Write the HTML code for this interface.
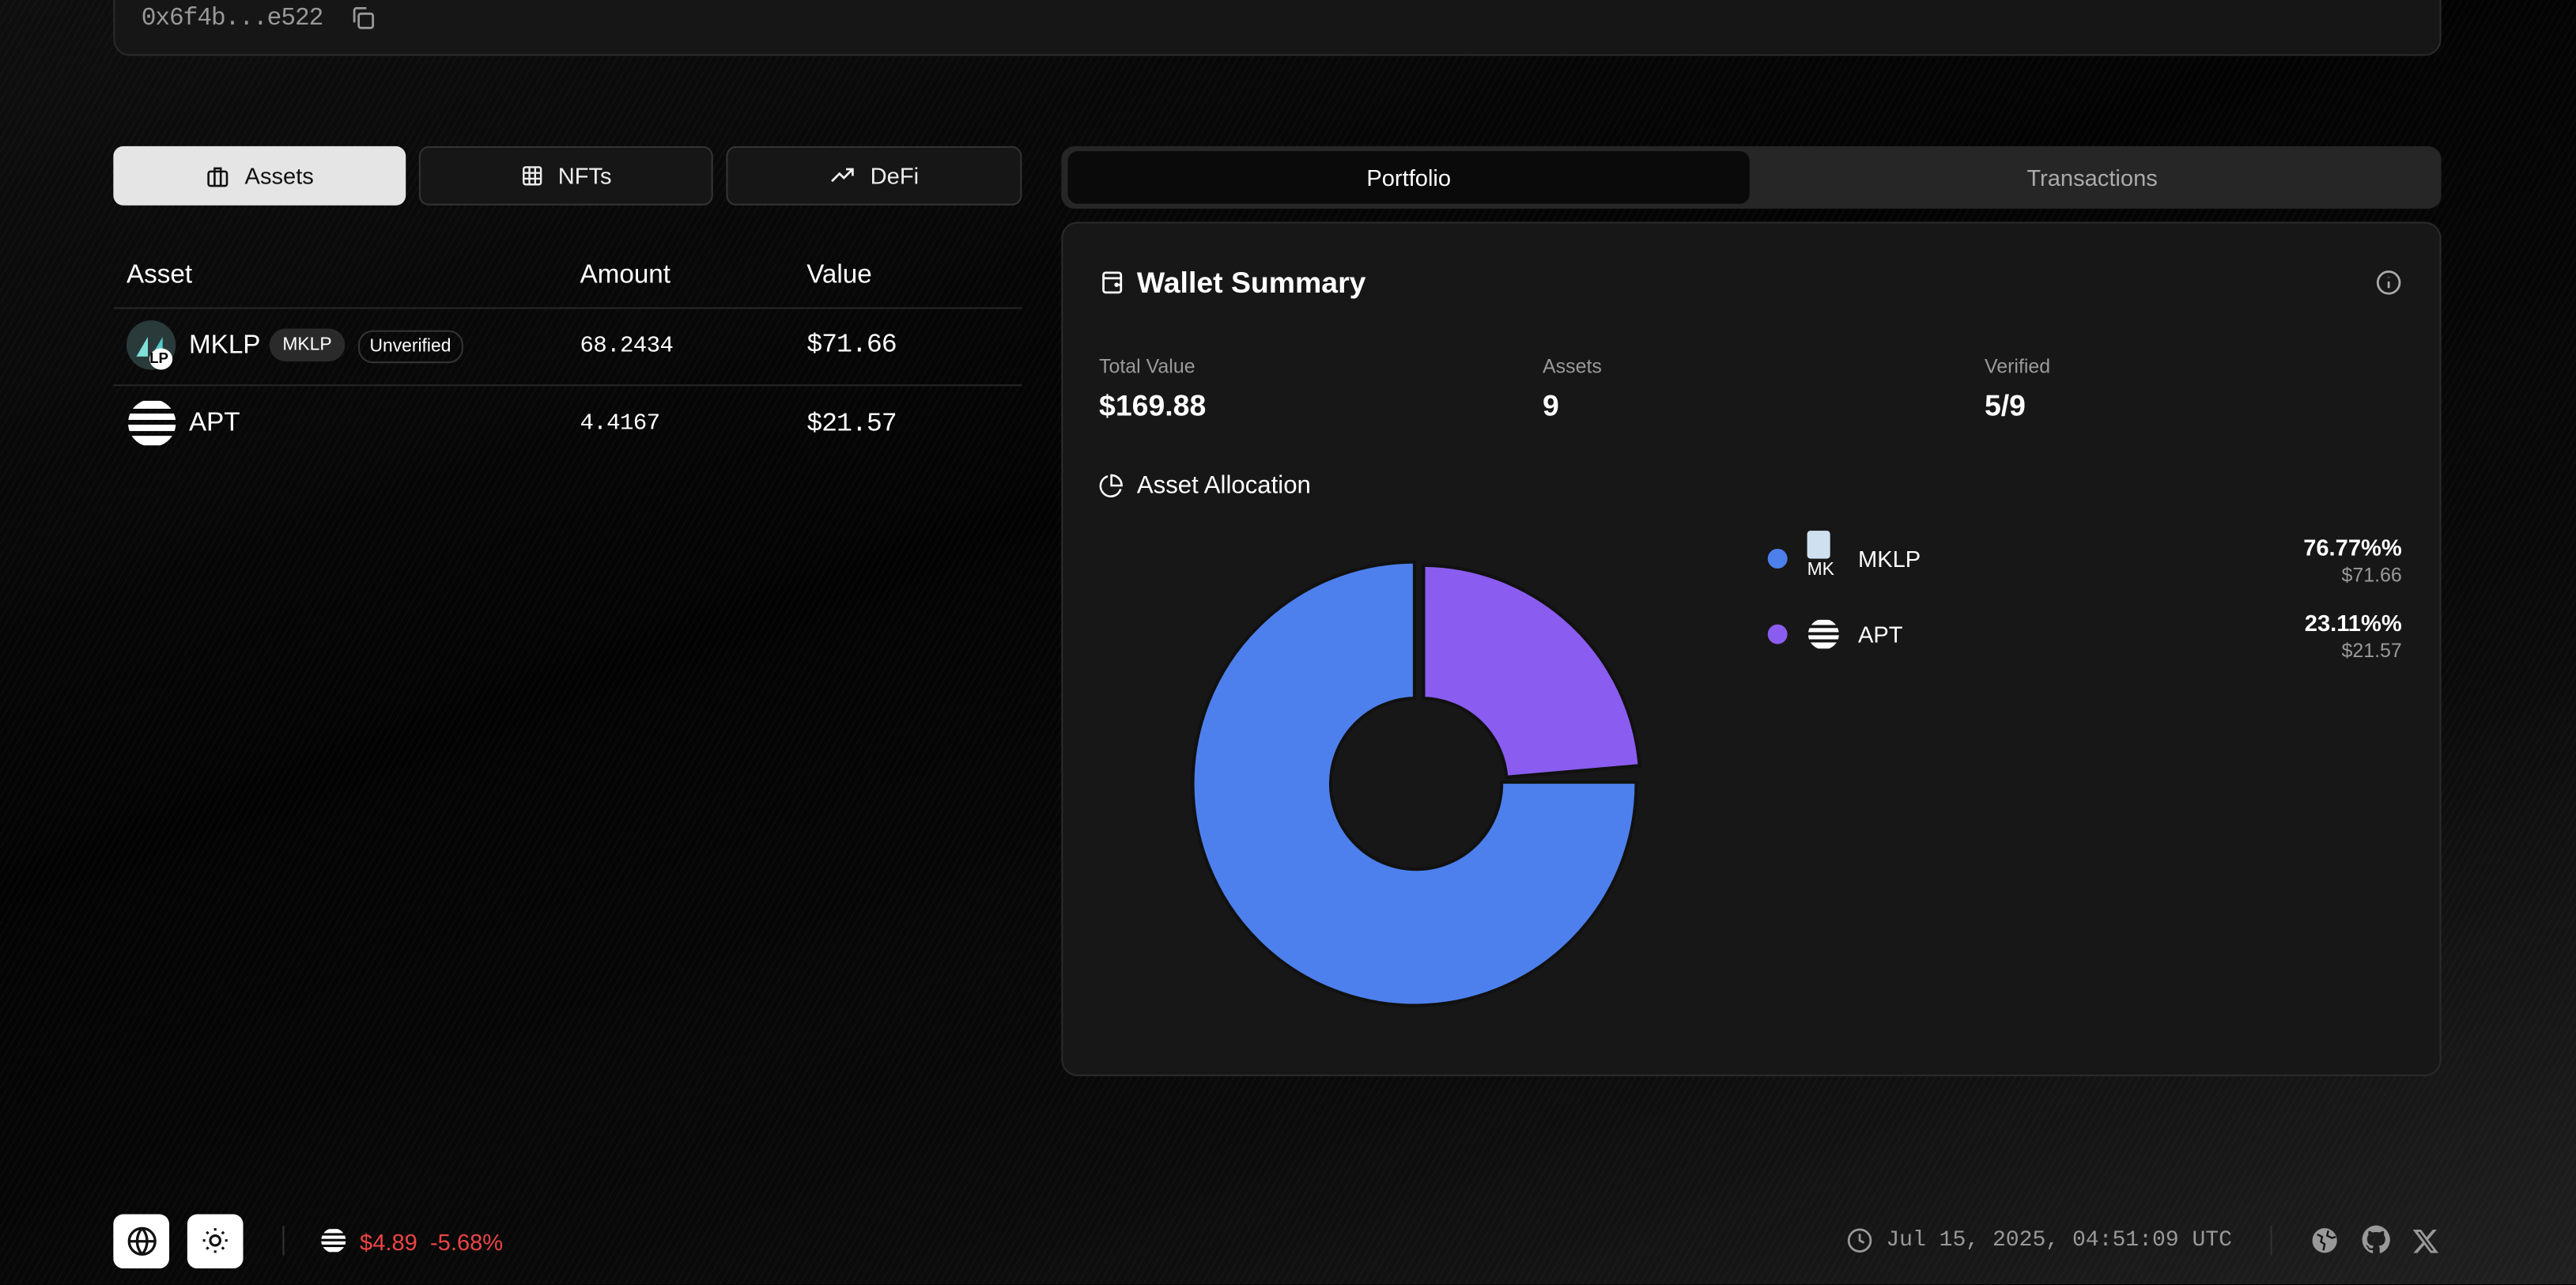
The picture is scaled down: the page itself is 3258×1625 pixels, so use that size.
<!DOCTYPE html>
<html><head><meta charset="utf-8"><style>
html,body{margin:0;padding:0;width:3258px;height:1624px;overflow:hidden;background:#050505}
#bg{position:absolute;left:0;top:0;width:3258px;height:1624px;background:linear-gradient(160deg,#0f0f0f 0%,#030303 40%,#0a0a0a 70%,#202020 100%)}
#bg:after{content:"";position:absolute;inset:0;background:repeating-linear-gradient(-60deg,rgba(255,255,255,0.025) 0 2px,transparent 2px 8px)}
#w{position:absolute;left:0;top:0;width:1568px;height:782px;transform:scale(2.0778);transform-origin:0 0;font-family:"Liberation Sans",sans-serif;color:#fff}
.a{position:absolute}
.mono{font-family:"Liberation Mono",monospace}
.tab{position:absolute;top:89px;height:36px;border-radius:6px;box-sizing:border-box;display:flex;align-items:center;justify-content:center;font-size:14px;gap:9px}
.tab.off{background:#161616;border:1px solid #333;color:#eee}
.line{position:absolute;left:69px;width:553px;height:1px;background:#262626}
.lbl{font-size:12px;color:#9a9a9a}
.val{font-size:18px;font-weight:bold}
</style></head><body><div id="bg"></div>
<div id="w">
<div class="a" style="left:69px;top:-20px;width:1417px;height:54px;background:#161616;border:1px solid #2b2b2b;border-radius:10px;box-sizing:border-box"></div>
<div class="a mono" style="left:86px;top:3px;font-size:15px;color:#999;letter-spacing:-0.5px">0x6f4b...e522</div>
<svg class="a" style="left:213px;top:3px" width="16" height="16" viewBox="0 0 24 24" fill="none" stroke="#999" stroke-width="2"><rect x="8" y="8" width="13" height="13" rx="2"/><path d="M4 16V5a2 2 0 0 1 2-2h9"/></svg>

<div class="tab" style="left:69px;width:178px;background:#e5e5e5;color:#111">
<svg width="15" height="15" viewBox="0 0 24 24" fill="none" stroke="#111" stroke-width="2"><rect x="3" y="7" width="18" height="14" rx="2"/><path d="M9 7V4h6v3M9 7v14M15 7v14"/></svg>Assets</div>
<div class="tab off" style="left:255px;width:179px"><svg width="14" height="14" viewBox="0 0 24 24" fill="none" stroke="#eee" stroke-width="2"><rect x="3" y="3" width="18" height="18" rx="2"/><path d="M3 9h18M3 15h18M9 3v18M15 3v18"/></svg>NFTs</div>
<div class="tab off" style="left:442px;width:180px"><svg width="16" height="16" viewBox="0 0 24 24" fill="none" stroke="#eee" stroke-width="2"><path d="M2 17l7-7 4 4 8-8M15 6h6v6"/></svg>DeFi</div>

<div class="a" style="left:77px;top:159px;font-size:16px">Asset</div>
<div class="a" style="left:353px;top:159px;font-size:16px">Amount</div>
<div class="a" style="left:491px;top:159px;font-size:16px">Value</div>
<div class="line" style="top:187px"></div>
<div class="line" style="top:234px"></div>

<div class="a" style="left:77px;top:195px;width:30px;height:30px;border-radius:50%;background:#2a3a3a"></div>
<svg class="a" style="left:80px;top:199px" width="24" height="22" viewBox="0 0 24 22"><path d="M3 18L10 6v12z" fill="#7fe0d8"/><path d="M12 18l7-12v12z" fill="#5cc"/></svg>
<div class="a" style="left:91px;top:212px;width:14px;height:13px;border-radius:50%;background:#fff;color:#000;font-size:9px;font-weight:bold;line-height:13px">LP</div>
<div class="a" style="left:115px;top:202px;font-size:16px">MKLP</div>
<div class="a" style="left:164px;top:200px;height:20px;padding:0 8px;border-radius:10px;background:#2a2a2a;font-size:11px;line-height:20px">MKLP</div>
<div class="a" style="left:218px;top:201px;height:18px;padding:0 6px;border-radius:9px;border:1px solid #333;font-size:11px;line-height:18px">Unverified</div>
<div class="a mono" style="left:353px;top:203px;font-size:14px;letter-spacing:-0.3px">68.2434</div>
<div class="a mono" style="left:491px;top:201px;font-size:16px;letter-spacing:-0.5px">$71.66</div>

<svg class="a" style="left:77px;top:242px" width="31" height="31" viewBox="0 0 32 32"><defs><clipPath id="c"><circle cx="16" cy="16" r="15"/></clipPath></defs><g clip-path="url(#c)" fill="#fff"><rect x="0" y="2" width="32" height="5"/><rect x="0" y="10" width="32" height="4"/><rect x="0" y="17" width="32" height="4"/><rect x="0" y="24" width="32" height="6"/></g></svg>
<div class="a" style="left:115px;top:249px;font-size:16px">APT</div>
<div class="a mono" style="left:353px;top:250px;font-size:14px;letter-spacing:-0.3px">4.4167</div>
<div class="a mono" style="left:491px;top:249px;font-size:16px;letter-spacing:-0.5px">$21.57</div>

<div class="a" style="left:646px;top:89px;width:840px;height:38px;background:#262626;border-radius:8px"></div>
<div class="a" style="left:650px;top:92px;width:415px;height:32px;background:#0a0a0a;border-radius:6px;font-size:14px;text-align:center;line-height:32px">Portfolio</div>
<div class="a" style="left:1065px;top:92px;width:417px;height:32px;font-size:14px;text-align:center;line-height:32px;color:#aaa">Transactions</div>

<div class="a" style="left:646px;top:135px;width:840px;height:520px;background:#171717;border:1px solid #2a2a2a;border-radius:10px;box-sizing:border-box"></div>
<svg class="a" style="left:669px;top:164px" width="16" height="16" viewBox="0 0 24 24" fill="none" stroke="#fff" stroke-width="2"><rect x="4" y="3" width="16" height="18" rx="2"/><path d="M4 8h16M14 14h6"/><circle cx="16" cy="14" r="1"/></svg>
<div class="a" style="left:692px;top:162px;font-size:18px;font-weight:bold">Wallet Summary</div>
<svg class="a" style="left:1446px;top:164px" width="16" height="16" viewBox="0 0 24 24" fill="none" stroke="#aaa" stroke-width="2"><circle cx="12" cy="12" r="10"/><path d="M12 11v6M12 7v.5"/></svg>

<div class="a lbl" style="left:669px;top:216px">Total Value</div>
<div class="a lbl" style="left:939px;top:216px">Assets</div>
<div class="a lbl" style="left:1208px;top:216px">Verified</div>
<div class="a val" style="left:669px;top:237px">$169.88</div>
<div class="a val" style="left:939px;top:237px">9</div>
<div class="a val" style="left:1208px;top:237px">5/9</div>

<svg class="a" style="left:669px;top:288px" width="15" height="15" viewBox="0 0 24 24" fill="none" stroke="#fff" stroke-width="2"><path d="M21 15.5A10 10 0 1 1 8.5 3"/><path d="M12 2a10 10 0 0 1 10 10H12z"/></svg>
<div class="a" style="left:692px;top:287px;font-size:15px">Asset Allocation</div>

<svg class="a" style="left:720px;top:335px" width="284" height="284" viewBox="-142 -142 284 284">
<path d="M0.5 -133 A133 133 0 0 1 132 -11 L51 -4 A52 52 0 0 0 0.5 -52 Z" transform="translate(4,0)" fill="#8b5cf0" stroke="#111" stroke-width="2"/>
<path d="M134 -1 A135 135 0 1 1 -1 -135 L-1 -52 A52 52 0 1 0 52 -1 Z" fill="#4d80ec" stroke="#111" stroke-width="2"/>
</svg>

<div class="a" style="left:1076px;top:334px;width:12px;height:12px;border-radius:50%;background:#4d80ec"></div>
<div class="a" style="left:1100px;top:323px;width:14px;height:17px;background:#cfe0f0;border-radius:2px"></div>
<div class="a" style="left:1100px;top:341px;font-size:11px">MK</div>
<div class="a" style="left:1131px;top:332px;font-size:14px">MKLP</div>
<div class="a" style="left:1362px;top:325px;width:100px;text-align:right;font-size:14px;font-weight:bold">76.77%%</div>
<div class="a lbl" style="left:1362px;top:343px;width:100px;text-align:right">$71.66</div>

<div class="a" style="left:1076px;top:380px;width:12px;height:12px;border-radius:50%;background:#8b5cf0"></div>
<svg class="a" style="left:1100px;top:376px" width="20" height="20" viewBox="0 0 32 32"><g clip-path="url(#c)" fill="#fff"><rect x="0" y="2" width="32" height="5"/><rect x="0" y="10" width="32" height="4"/><rect x="0" y="17" width="32" height="4"/><rect x="0" y="24" width="32" height="6"/></g></svg>
<div class="a" style="left:1131px;top:378px;font-size:14px">APT</div>
<div class="a" style="left:1362px;top:371px;width:100px;text-align:right;font-size:14px;font-weight:bold">23.11%%</div>
<div class="a lbl" style="left:1362px;top:389px;width:100px;text-align:right">$21.57</div>

<div class="a" style="left:69px;top:739px;width:34px;height:33px;background:#fff;border-radius:6px"></div>
<svg class="a" style="left:77px;top:746px" width="19" height="19" viewBox="0 0 24 24" fill="none" stroke="#111" stroke-width="2"><circle cx="12" cy="12" r="10"/><path d="M2 12h20M12 2a15 15 0 0 1 0 20M12 2a15 15 0 0 0 0 20"/></svg>
<div class="a" style="left:114px;top:739px;width:34px;height:33px;background:#fff;border-radius:6px"></div>
<svg class="a" style="left:122px;top:746px" width="18" height="18" viewBox="0 0 24 24" fill="none" stroke="#111" stroke-width="2"><circle cx="12" cy="12" r="4"/><path d="M12 2v2M12 20v2M2 12h2M20 12h2M5 5l1.5 1.5M17.5 17.5L19 19M5 19l1.5-1.5M17.5 6.5L19 5"/></svg>
<div class="a" style="left:172px;top:746px;width:1px;height:18px;background:#333"></div>
<svg class="a" style="left:195px;top:747px" width="16" height="16" viewBox="0 0 32 32"><g clip-path="url(#c)" fill="#fff"><rect x="0" y="2" width="32" height="5"/><rect x="0" y="10" width="32" height="4"/><rect x="0" y="17" width="32" height="4"/><rect x="0" y="24" width="32" height="6"/></g></svg>
<div class="a" style="left:219px;top:748px;font-size:14px;color:#ef4444">$4.89 &nbsp;-5.68%</div>

<svg class="a" style="left:1124px;top:747px" width="16" height="16" viewBox="0 0 24 24" fill="none" stroke="#999" stroke-width="2"><circle cx="12" cy="12" r="10"/><path d="M12 6v6l4 2"/></svg>
<div class="a mono" style="left:1148px;top:748px;font-size:13.5px;color:#999">Jul 15, 2025, 04:51:09 UTC</div>
<div class="a" style="left:1382px;top:746px;width:1px;height:18px;background:#333"></div>
<svg class="a" style="left:1406px;top:746px" width="18" height="18" viewBox="0 0 24 24"><circle cx="12" cy="12" r="10" fill="#999"/><path d="M6 7l4 2-1 4 3 2-1 5M15 4l-1 4 4 2 3-1" stroke="#111" stroke-width="1.5" fill="none"/></svg>
<svg class="a" style="left:1437px;top:745px" width="19" height="19" viewBox="0 0 24 24" fill="#999"><path d="M12 1a11 11 0 0 0-3.5 21.4c.6.1.8-.2.8-.5v-2c-3.1.7-3.800-1.3-3.800-1.3-.5-1.3-1.2-1.600-1.2-1.600-1-.7.1-.7.1-.7 1.1.1 1.7 1.1 1.7 1.1 1 1.7 2.6 1.2 3.2.9.1-.7.4-1.2.7-1.5-2.5-.3-5.1-1.2-5.1-5.5 0-1.2.4-2.2 1.1-3-.1-.3-.5-1.4.1-2.9 0 0 .9-.3 3 1.1a10.500 10.500 0 0 1 5.500 0c2.1-1.4 3-1.1 3-1.1.6 1.5.2 2.6.1 2.9.7.8 1.100 1.800 1.100 3 0 4.300-2.600 5.200-5.100 5.500.4.3.8 1 .8 2v3c0 .3.2.6.8.5A11 11 0 0 0 12 1z"/></svg>
<svg class="a" style="left:1468px;top:747px" width="17" height="17" viewBox="0 0 24 24" fill="#999"><path d="M18.2 2h3.4l-7.4 8.5L23 22h-6.8l-5.3-7-6.1 7H1.4l7.9-9L1 2h7l4.8 6.4zm-1.2 18h1.9L7.1 3.9H5.1z"/></svg>
</div>
</body></html>
